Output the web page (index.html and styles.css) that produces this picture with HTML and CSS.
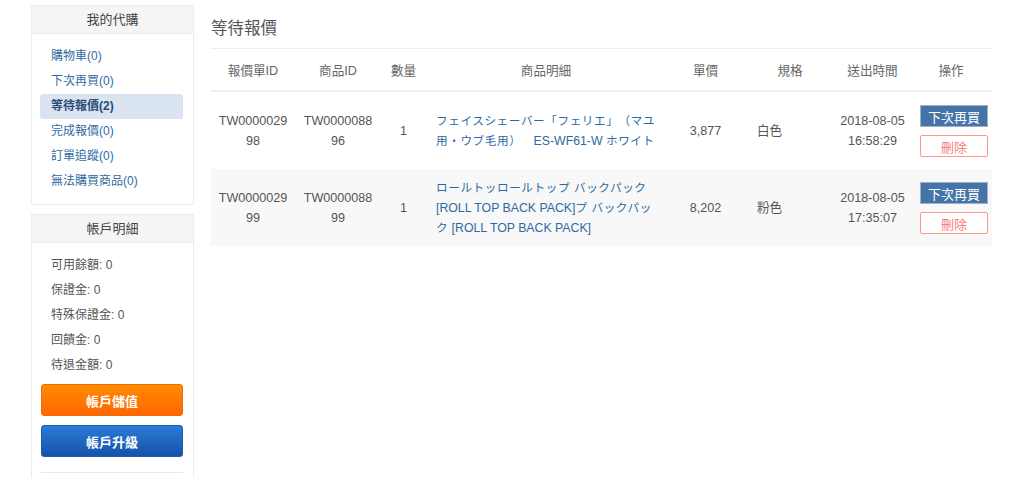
FILE: index.html
```html
<!DOCTYPE html>
<html lang="zh-Hant">
<head>
    <meta charset="UTF-8">
    <title>等待報價</title>
    <link rel="stylesheet" href="styles.css">
</head>
<body>
    <div class="page">
        <div class="sidebar">
            <div class="panel">
                <div class="panel-title">我的代購</div>
                <ul class="menu">
                    <li><a href="#">購物車(0)</a></li>
                    <li><a href="#">下次再買(0)</a></li>
                    <li class="active"><a href="#">等待報價(2)</a></li>
                    <li><a href="#">完成報價(0)</a></li>
                    <li><a href="#">訂單追蹤(0)</a></li>
                    <li><a href="#">無法購買商品(0)</a></li>
                </ul>
            </div>
            <div class="panel panel-account">
                <div class="panel-title">帳戶明細</div>
                <ul class="info">
                    <li>可用餘額: 0</li>
                    <li>保證金: 0</li>
                    <li>特殊保證金: 0</li>
                    <li>回饋金: 0</li>
                    <li>待退金額: 0</li>
                </ul>
                <div class="actions">
                    <button class="btn-big orange">帳戶儲值</button>
                    <button class="btn-big blue">帳戶升級</button>
                </div>
                <hr>
            </div>
        </div>

        <div class="main">
            <h1>等待報價</h1>
            <table class="quotes">
                <thead>
                    <tr>
                        <th class="c-id">報價單ID</th>
                        <th class="c-pid">商品ID</th>
                        <th class="c-qty">數量</th>
                        <th class="c-desc">商品明細</th>
                        <th class="c-price">單價</th>
                        <th class="c-spec">規格</th>
                        <th class="c-time">送出時間</th>
                        <th class="c-op">操作</th>
                    </tr>
                </thead>
                <tbody>
                    <tr>
                        <td>TW0000029<br>98</td>
                        <td>TW0000088<br>96</td>
                        <td>1</td>
                        <td class="desc"><a href="#"><span class="ja">フェイスシェーバー「フェリエ」（マユ用・ウブ毛用）　</span>ES-WF61-W <span class="ja">ホワイト</span></a></td>
                        <td>3,877</td>
                        <td class="spec">白色</td>
                        <td>2018-08-05<br>16:58:29</td>
                        <td>
                            <div class="op">
                                <button class="btn-buy">下次再買</button>
                                <button class="btn-del">刪除</button>
                            </div>
                        </td>
                    </tr>
                    <tr class="alt">
                        <td>TW0000029<br>99</td>
                        <td>TW0000088<br>99</td>
                        <td>1</td>
                        <td class="desc"><a href="#"><span class="ja">ロールトッロールトップ バックパック</span> [ROLL TOP BACK PACK]<span class="ja">プ バックパック</span> [ROLL TOP BACK PACK]</a></td>
                        <td>8,202</td>
                        <td class="spec">粉色</td>
                        <td>2018-08-05<br>17:35:07</td>
                        <td>
                            <div class="op">
                                <button class="btn-buy">下次再買</button>
                                <button class="btn-del">刪除</button>
                            </div>
                        </td>
                    </tr>
                </tbody>
            </table>
        </div>
    </div>
</body>
</html>
```

FILE: styles.css
```css
body {
    margin: 0;
    background-color: #fff;
    font-family: "Liberation Sans", "Noto Sans CJK TC", sans-serif;
    font-size: 13px;
    color: #555;
}
.page {
    display: flex;
    gap: 17px;
    width: 961px;
    padding: 5px 0 0 31px;
}
.sidebar {
    width: 163px;
    flex-shrink: 0;
    display: flex;
    flex-direction: column;
    gap: 9px;
}
.panel {
    border: 1px solid #ececec;
}
.panel-title {
    height: 27px;
    line-height: 27px;
    background-color: #f5f5f5;
    border-bottom: 1px solid #ececec;
    text-align: center;
    color: #444;
}
.menu,
.info {
    list-style: none;
    margin: 0;
    padding: 10px 10px 10px 8px;
    font-size: 12px;
}
.menu li a {
    display: block;
    height: 25px;
    line-height: 25px;
    padding-left: 11px;
    color: #2f6aa3;
    text-decoration: none;
    border-radius: 3px;
}
.menu li.active a {
    background-color: #dae3f0;
    color: #274b78;
    font-weight: bold;
}
.info {
    padding: 10px 10px 0 19px;
}
.info li {
    height: 25px;
    line-height: 25px;
    color: #555;
}
.actions {
    display: flex;
    flex-direction: column;
    gap: 9px;
    padding: 6px 10px 0 9px;
}
.btn-big {
    height: 32px;
    border-radius: 3px;
    color: #fff;
    font-family: inherit;
    font-size: 13px;
    font-weight: bold;
    cursor: pointer;
}
.orange {
    background: linear-gradient(#ff8c00, #ff6600);
    border: 1px solid #f06a00;
}
.blue {
    background: linear-gradient(#2b7bd8, #1652a9);
    border: 1px solid #1c5bb0;
}
.panel-account hr {
    border: none;
    border-top: 1px solid #e8e8e8;
    margin: 15px 10px 20px 9px;
}
.main {
    width: 781px;
}
h1 {
    margin: 0;
    height: 43px;
    line-height: 46px;
    font-size: 16.5px;
    font-weight: normal;
    color: #555;
}
.quotes {
    width: 100%;
    border-collapse: collapse;
    table-layout: fixed;
    font-size: 12.6px;
}
.quotes th {
    height: 41px;
    padding: 0;
    font-weight: normal;
    color: #666;
    border-top: 1px solid #eee;
    border-bottom: 2px solid #eee;
    text-align: center;
}
.c-id { width: 84px; }
.c-pid { width: 86px; }
.c-qty { width: 45px; }
.c-desc { width: 240px; }
.c-price { width: 79px; }
.c-spec { width: 90px; }
.c-time { width: 75px; }
.quotes td {
    padding: 8px 0;
    text-align: center;
    line-height: 20px;
    color: #555;
    vertical-align: middle;
}
.quotes tr.alt td {
    background-color: #f8f8f8;
}
.quotes td.desc {
    text-align: left;
    padding-left: 10px;
    padding-right: 9px;
    line-height: 19px;
}
.desc a {
    color: #2d6aa2;
    text-decoration: none;
    font-size: 12.3px;
}
.desc .ja {
    font-size: 11.6px;
    letter-spacing: 0.6px;
    text-spacing-trim: space-all;
}
.quotes td.spec {
    text-align: left;
    padding-left: 12px;
}
.op {
    display: flex;
    flex-direction: column;
    align-items: center;
    gap: 8px;
    margin: 5px 0 4px;
    padding-left: 6px;
}
.btn-buy,
.btn-del {
    width: 68px;
    height: 22px;
    padding: 0;
    font-family: inherit;
    font-size: 13px;
    cursor: pointer;
}
.btn-buy {
    background-color: #4474a8;
    border: 1px solid #a2b1c2;
    color: #fff;
}
.btn-del {
    background-color: #fff;
    border: 1px solid #f99c86;
    border-radius: 2px;
    color: #f77d7d;
}
```
